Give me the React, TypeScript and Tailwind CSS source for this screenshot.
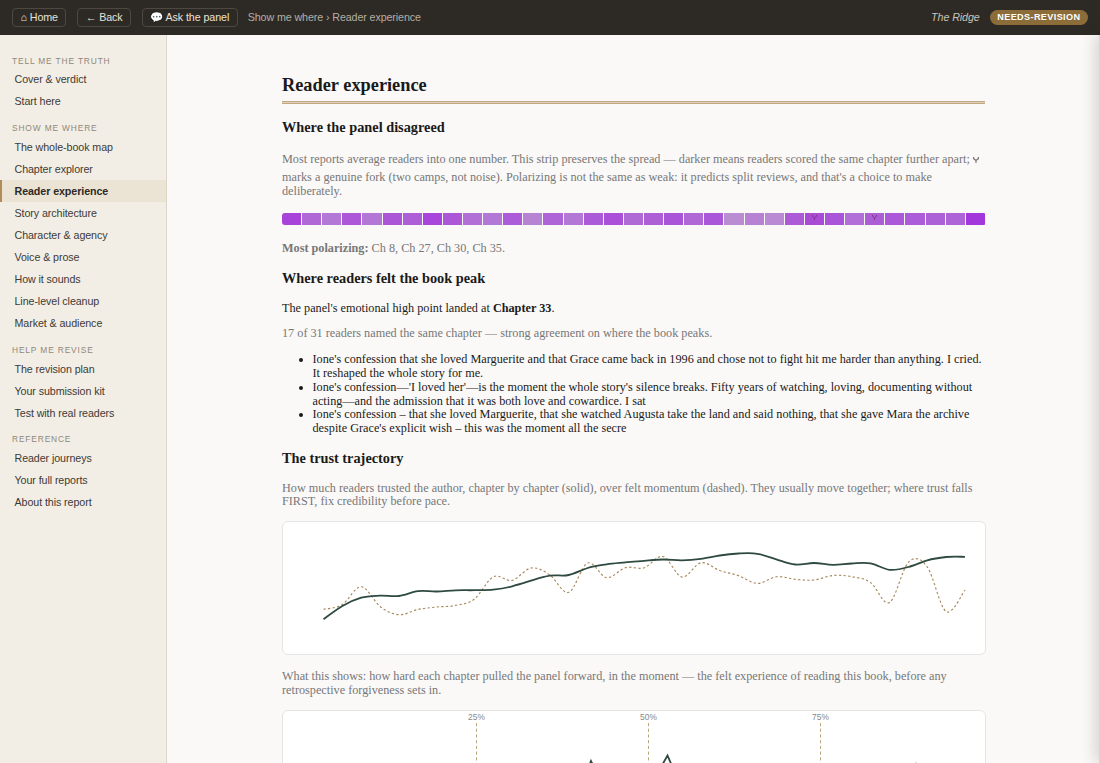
type NavGroup = { title: string; items: string[] }

const navGroups: NavGroup[] = [
    { title: "Tell me the truth", items: ["Cover & verdict", "Start here"] },
    {
        title: "Show me where",
        items: [
            "The whole-book map",
            "Chapter explorer",
            "Reader experience",
            "Story architecture",
            "Character & agency",
            "Voice & prose",
            "How it sounds",
            "Line-level cleanup",
            "Market & audience",
        ],
    },
    { title: "Help me revise", items: ["The revision plan", "Your submission kit", "Test with real readers"] },
    { title: "Reference", items: ["Reader journeys", "Your full reports", "About this report"] },
]

const stripColors = [
    "#a743d9", "#b068d6", "#b377d5", "#ac58d8", "#b377d5", "#ab55d7", "#ac5fd6", "#a845da", "#ab57d7",
    "#b26fd6", "#b377d6", "#ac5cd8", "#b684d3", "#ae64d6", "#b377d5", "#ab5bd7", "#aa50d9", "#b06ad6",
    "#ae5fd6", "#aa54d9", "#b068d6", "#aa58d9", "#ba8dd3", "#b782d4", "#ba8ad4", "#ac5ad6", "#a84cd8",
    "#aa54d9", "#b26fd7", "#ac5ed6", "#ab59d8", "#ac5cd8", "#ad61d7", "#ae64d7", "#a238dc",
]

const trust = [
    619.3, 606, 597.7, 595.7, 596, 591.2, 591.5, 590.3, 590.2, 589.7, 586.3, 580.7, 575.7, 575, 568, 564.3, 562.3,
    560.8, 559.5, 560.4, 558.9, 555.5, 553.5, 553.8, 559.3, 564.5, 563, 564.8, 563.5, 563.4, 569.8, 567, 560.3, 557,
    556.8,
]
const momentum = [
    609.3, 604.5, 586.7, 606.5, 614.7, 609.5, 607, 605.4, 599, 576.8, 580.4, 568, 575, 592.3, 563, 577.7, 567.7,
    567.7, 556.5, 577, 562.7, 570.5, 575.7, 583.4, 576.8, 579.3, 580, 575.5, 576.7, 582.6, 602.5, 562.3, 567, 611.6,
    590,
]

const quotes = [
    "Ione's confession that she loved Marguerite and that Grace came back in 1996 and chose not to fight hit me harder than anything. I cried. It reshaped the whole story for me.",
    "Ione's confession—'I loved her'—is the moment the whole story's silence breaks. Fifty years of watching, loving, documenting without acting—and the admission that it was both love and cowardice. I sat",
    "Ione's confession – that she loved Marguerite, that she watched Augusta take the land and said nothing, that she gave Mara the archive despite Grace's explicit wish – this was the moment all the secre",
]

// cardinal spline through evenly spaced chapter values
const smoothPath = (values: number[]) => {
    const pts = values.map((v, i) => [40.5 + i * 18.868, v - 522])
    let d = `M${pts[0][0]},${pts[0][1]}`
    for (let i = 0; i < pts.length - 1; i++) {
        const p0 = pts[i - 1] ?? pts[i]
        const p1 = pts[i]
        const p2 = pts[i + 1]
        const p3 = pts[i + 2] ?? p2
        d += `C${p1[0] + (p2[0] - p0[0]) / 6},${p1[1] + (p2[1] - p0[1]) / 5.5} ${p2[0] - (p3[0] - p1[0]) / 6},${p2[1] - (p3[1] - p1[1]) / 5.5} ${p2[0]},${p2[1]}`
    }
    return d
}

const ForkIcon = ({ className }: { className: string }) => (
    <svg viewBox="0 0 6 6" fill="none" stroke="currentColor" className={className} role="img" aria-label="fork">
        <path d="M0.6 0V1.6L3 3.4L5.4 1.6V0M3 3.2V6" strokeWidth="1.2" />
    </svg>
)

const TopBar = () => (
    <header className="flex h-[35px] shrink-0 items-center bg-[#2d2a26] px-3 text-[10.7px] tracking-[-0.08px] text-[#e8e2d6]">
        <div className="flex items-center gap-[10.7px]">
            {["⌂ Home", "← Back", "💬 Ask the panel"].map(label => (
                <button
                    key={label}
                    className="h-[19px] rounded-[4px] border border-[#4d4841] px-[7.5px] leading-none whitespace-nowrap"
                >
                    {label}
                </button>
            ))}
            <span className="-ml-[0.7px] tracking-[-0.1px] text-[#b5aea2]">Show me where › Reader experience</span>
        </div>
        <div className="ml-auto flex items-center gap-[10px]">
            <em className="text-[#c9c2b6]">The Ridge</em>
            <span className="flex h-[15px] items-center rounded-full bg-[#8c6d3a] px-[7.6px] text-[9.1px] font-bold tracking-[0.38px] text-white">
                NEEDS-REVISION
            </span>
        </div>
    </header>
)

const Sidebar = () => (
    <nav className="w-[167px] shrink-0 border-r border-[#ddd6c8] bg-[#f3eee5] pt-[10px]">
        {navGroups.map(group => (
            <div key={group.title} className="pt-[9.6px]">
                <div className="mb-[1.6px] h-[12px] px-3 text-[8.4px] leading-[12px] tracking-[0.85px] text-[#8f887b] uppercase">
                    {group.title}
                </div>
                {group.items.map(item => (
                    <a
                        key={item}
                        className={
                            item === "Reader experience"
                                ? "block h-[22.1px] border-l-2 border-[#b08d57] bg-[#ebe3d3] pl-[12.5px] text-[10.7px] leading-[23px] font-bold tracking-[-0.08px] text-[#2d2a26]"
                                : "block h-[22.1px] border-l-2 border-transparent pl-[12.5px] text-[10.7px] leading-[23px] tracking-[-0.08px] text-[#3d3a35]"
                        }
                    >
                        {item}
                    </a>
                ))}
            </div>
        ))}
    </nav>
)

const TrustChart = () => (
    <div className="h-[134px] w-[704px] rounded-[6px] border border-[#e5e5e5] bg-white">
        <svg width="702" height="132" fill="none">
            <path d={smoothPath(momentum)} stroke="#a8875a" strokeWidth="1.15" strokeDasharray="2.3 2.3" />
            <path d={smoothPath(trust)} stroke="#2f4a40" strokeWidth="1.8" />
        </svg>
    </div>
)

const PullChart = () => (
    <div className="h-[134px] w-[704px] rounded-[6px] border border-[#e5e5e5] bg-white">
        <svg width="702" height="132" fill="none">
            {[25, 50, 75].map((pct, i) => (
                <g key={pct}>
                    <path d={`M${193.5 + i * 172},12V132`} stroke="#b9a880" strokeWidth="1" strokeDasharray="3.2 2.5" />
                    <text
                        x={193.5 + i * 172}
                        y="9"
                        textAnchor="middle"
                        className="fill-[#888888] font-['Liberation_Sans',sans-serif] text-[8.4px]"
                    >
                        {pct}%
                    </text>
                </g>
            ))}
            <path
                d="M299,74L308,50L318,71L369,72L384.5,44.5L396,71L610,84L633,53L650,84"
                stroke="#2f4a40"
                strokeWidth="1.8"
            />
        </svg>
    </div>
)

const Content = () => (
    <main className="flex flex-1 justify-center overflow-hidden bg-[#faf9f7] pt-[40px]">
        <div className="w-[703px] font-['Liberation_Serif',serif] text-[12.22px] leading-[13.75px] text-[#1a1a1a]">
            <h1 className="h-[26px] text-[18.34px] leading-5 font-bold">Reader experience</h1>
            <div className="h-[3px] border-y border-[#c2a983] bg-[#dfd0b6]" />
            <h3 className="mt-[15px] text-[14.3px] leading-4 font-bold">Where the panel disagreed</h3>
            <p className="mt-[15px] text-[#777777]">
                Most reports average readers into one number. This strip preserves the spread — darker means readers scored the
                same chapter further apart;{" "}
                <span className="whitespace-nowrap">
                    <span className="inline-block h-[21.2px] w-0 align-[-8px]" />
                    <ForkIcon className="inline-block size-[6px] align-baseline" />
                </span>{" "}
                marks a genuine fork (two camps, not noise). Polarizing is not the same as weak: it predicts split reviews, and
                that's a choice to make deliberately.
            </p>
            <div className="mt-[14px] flex h-3 gap-px overflow-hidden rounded-l-[3px] rounded-r-[1px]">
                {stripColors.map((color, i) => (
                    <span key={i} className="flex flex-1 justify-center pt-[2px] text-[#86338a]" style={{ background: color }}>
                        {(i === 26 || i === 29) && <ForkIcon className="size-[5px]" />}
                    </span>
                ))}
            </div>
            <p className="mt-[17.7px] text-[#777777]">
                <b>Most polarizing:</b> Ch 8, Ch 27, Ch 30, Ch 35.
            </p>
            <h3 className="mt-[13.8px] text-[14.3px] leading-4 font-bold">Where readers felt the book peak</h3>
            <p className="mt-[15.7px]">
                The panel's emotional high point landed at <b>Chapter 33</b>.
            </p>
            <p className="mt-3 text-[#777777]">
                17 of 31 readers named the same chapter — strong agreement on where the book peaks.
            </p>
            <ul className="mt-[12.3px] list-disc pl-[30.5px]">
                {quotes.map(quote => (
                    <li key={quote}>{quote}</li>
                ))}
            </ul>
            <h3 className="mt-[14px] text-[14.3px] leading-4 font-bold">The trust trajectory</h3>
            <p className="mt-[15.7px] text-[#777777]">
                How much readers trusted the author, chapter by chapter (solid), over felt momentum (dashed). They usually move
                together; where trust falls FIRST, fix credibility before pace.
            </p>
            <div className="mt-[11.7px]">
                <TrustChart />
            </div>
            <p className="mt-[15.4px] mb-[11.9px] text-[#777777]">
                What this shows: how hard each chapter pulled the panel forward, in the moment — the felt experience of reading
                this book, before any retrospective forgiveness sets in.
            </p>
            <PullChart />
        </div>
    </main>
)

export default function App() {
    return (
        <div className="relative flex h-[763px] w-[1100px] flex-col overflow-hidden font-['Liberation_Sans',sans-serif]">
            <TopBar />
            <div className="flex min-h-0 flex-1">
                <Sidebar />
                <Content />
            </div>
            {/* closed drawer, only its edge and shadow show */}
            <aside className="absolute top-[35px] -right-[299px] bottom-0 w-[300px] border-l border-[#ddd6c8] bg-white shadow-[-4px_0_14px_rgba(0,0,0,0.15)]" />
        </div>
    )
}
